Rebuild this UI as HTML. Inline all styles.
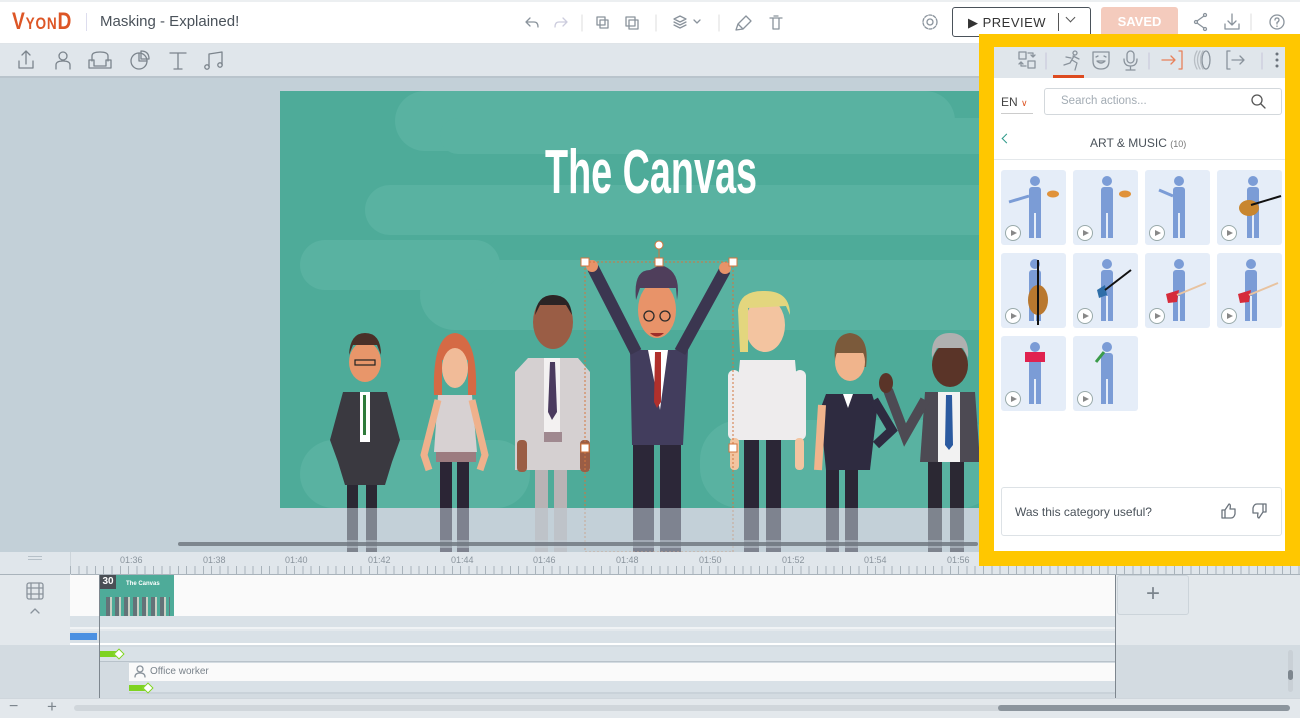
<!DOCTYPE html>
<html><head><meta charset="utf-8">
<style>
*{box-sizing:border-box;margin:0;padding:0}
body{width:1300px;height:718px;overflow:hidden;position:relative;font-family:"Liberation Sans",sans-serif;background:#c3d0d8}
.abs{position:absolute}
.ic{stroke:#8a939c;fill:none;stroke-width:1.3;stroke-linecap:round;stroke-linejoin:round}
.tile{position:absolute;width:65px;height:75px;background:#e5edf8;border-radius:3px}
.play{position:absolute;left:4px;bottom:4px;width:16px;height:16px;border-radius:50%;border:1px solid #9aa;background:#fff}
.play:after{content:"";position:absolute;left:5px;top:4px;border-left:6px solid #888;border-top:3.5px solid transparent;border-bottom:3.5px solid transparent}
.tl{position:absolute;font-size:9px;color:#8a949d;top:555px}
</style></head><body>

<svg class="abs" style="left:0;top:0" width="1300" height="718" viewBox="0 0 1300 718">
<rect x="0" y="78" width="1300" height="474" fill="#c3d0d8"/>
<rect x="280" y="91" width="720" height="417" fill="#4eab99"/>
<g fill="#59b2a1">
<rect x="395" y="91" width="560" height="60" rx="30"/>
<rect x="440" y="118" width="600" height="36" rx="18"/>
<rect x="365" y="185" width="640" height="50" rx="25"/>
<rect x="420" y="260" width="600" height="70" rx="35"/>
<rect x="300" y="240" width="200" height="50" rx="25"/>
<rect x="300" y="440" width="230" height="68" rx="34"/>
<rect x="700" y="420" width="300" height="88" rx="40"/>
</g>
<text x="651" y="193" font-family="'Liberation Sans Narrow','Liberation Sans',sans-serif" font-weight="bold" font-size="62" fill="#fff" text-anchor="middle" textLength="212" lengthAdjust="spacingAndGlyphs">The Canvas</text>
<g>
<rect x="347" y="480" width="11" height="72" fill="#2b2833"/><rect x="366" y="480" width="11" height="72" fill="#2b2833"/>
<path d="M343 392 L387 392 L400 440 L392 462 L385 485 L345 485 L338 462 L330 440Z" fill="#3a3940"/>
<rect x="360" y="392" width="10" height="50" fill="#fff"/><rect x="363" y="395" width="3" height="40" fill="#2f7a3a"/>
<ellipse cx="365" cy="362" rx="16" ry="20" fill="#e8966a"/><path d="M349 355 Q350 333 365 333 Q381 333 381 355 L377 345 L353 345Z" fill="#4a3028"/>
<rect x="355" y="360" width="20" height="5" fill="none" stroke="#222" stroke-width="1.2"/>
</g>
<g>
<rect x="440" y="460" width="12" height="92" fill="#2b2535"/><rect x="457" y="460" width="12" height="92" fill="#2b2535"/>
<path d="M438 395 L472 395 L477 452 L434 452Z" fill="#d7d1d2"/><rect x="436" y="452" width="40" height="10" fill="#9c7c80"/>
<path d="M438 400 L424 455 L429 470" stroke="#efb18c" stroke-width="7" fill="none"/><path d="M472 400 L485 455 L480 470" stroke="#efb18c" stroke-width="7" fill="none"/>
<path d="M434 395 Q432 335 455 333 Q478 335 476 395 L468 395 L468 360 L442 360 L442 395Z" fill="#d56a45"/>
<ellipse cx="455" cy="368" rx="13" ry="20" fill="#f1bb98"/>
</g>
<g>
<rect x="535" y="468" width="13" height="84" fill="#b8b3b5"/><rect x="554" y="468" width="13" height="84" fill="#b8b3b5"/>
<path d="M528 358 L578 358 L590 372 L590 470 L515 470 L515 372Z" fill="#d5d0d1"/>
<rect x="544" y="358" width="16" height="75" fill="#f3f1f1"/><path d="M550 362 L555 362 L557 412 L552 420 L548 412Z" fill="#4a3a5e"/>
<rect x="544" y="432" width="18" height="10" fill="#a08990"/>
<rect x="517" y="440" width="10" height="32" rx="4" fill="#9a5d45"/><rect x="580" y="440" width="10" height="32" rx="4" fill="#9a5d45"/>
<ellipse cx="553" cy="322" rx="20" ry="27" fill="#9a5d45"/><path d="M535 315 Q537 295 553 295 Q570 295 572 315 L566 305 L540 305Z" fill="#2b2425"/>
</g>
<g>
<rect x="633" y="440" width="21" height="112" fill="#2c2738"/><rect x="660" y="440" width="21" height="112" fill="#2c2738"/>
<path d="M630 350 L688 350 L683 445 L632 445Z" fill="#423d5d"/>
<path d="M648 350 L668 350 L660 410Z" fill="#fff"/><path d="M655 352 L661 352 L661 402 L657 408 L654 402Z" fill="#b0302c"/>
<path d="M636 352 L593 268" stroke="#3b3650" stroke-width="12"/><path d="M680 352 L725 270" stroke="#3b3650" stroke-width="12"/>
<circle cx="592" cy="266" r="6" fill="#e89369"/><circle cx="725" cy="268" r="6" fill="#e89369"/>
<ellipse cx="657" cy="310" rx="19" ry="28" fill="#e89369"/><path d="M636 300 Q633 270 650 270 L660 265 Q682 270 677 300 L676 288 L640 288Z" fill="#4f3e5b"/>
<circle cx="649" cy="316" r="5" fill="none" stroke="#2a2a2a" stroke-width="1.3"/><circle cx="665" cy="316" r="5" fill="none" stroke="#2a2a2a" stroke-width="1.3"/>
<path d="M650 333 Q657 340 664 333Z" fill="#9e2d2a"/>
</g>
<g>
<rect x="744" y="438" width="15" height="114" fill="#2b2636"/><rect x="766" y="438" width="15" height="114" fill="#2b2636"/>
<path d="M740 360 L795 360 L802 440 L732 440Z" fill="#eeeced"/>
<rect x="728" y="370" width="12" height="70" rx="6" fill="#eeeced"/><rect x="794" y="370" width="12" height="70" rx="6" fill="#eeeced"/>
<rect x="730" y="438" width="9" height="32" rx="4" fill="#f3c4a0"/><rect x="795" y="438" width="9" height="32" rx="4" fill="#f3c4a0"/>
<ellipse cx="765" cy="325" rx="20" ry="27" fill="#f3c4a0"/>
<path d="M740 352 L738 310 Q740 290 765 291 Q790 291 790 315 L786 306 L748 308 L748 352Z" fill="#e3d67e"/>
</g>
<g>
<rect x="826" y="462" width="13" height="90" fill="#2b2636"/><rect x="845" y="462" width="13" height="90" fill="#2b2636"/>
<path d="M826 394 L872 394 L877 410 L870 470 L826 470 L820 410Z" fill="#2e2b40"/>
<path d="M843 394 L853 394 L848 408Z" fill="#fff"/>
<path d="M822 405 L818 470" stroke="#f0b48c" stroke-width="8"/><path d="M874 400 L892 430 L876 445" stroke="#2e2b40" stroke-width="9" fill="none"/>
<path d="M836 367 Q830 335 850 333 Q870 335 866 367Z" fill="#7b5a3b"/>
<ellipse cx="850" cy="362" rx="15" ry="19" fill="#f0b48c"/><path d="M836 353 Q840 338 850 338 Q862 338 865 353Z" fill="#7b5a3b"/>
</g>
<g>
<rect x="928" y="460" width="14" height="92" fill="#2b2833"/><rect x="950" y="460" width="14" height="92" fill="#2b2833"/>
<path d="M925 392 L975 392 L980 462 L920 462Z" fill="#4d4a53"/>
<rect x="938" y="392" width="22" height="70" fill="#f2f2f2"/><path d="M946 395 L952 395 L953 445 L949 450 L945 445Z" fill="#2b5aa0"/>
<path d="M925 400 L905 435 L888 390" stroke="#4d4a53" stroke-width="10" fill="none"/><ellipse cx="886" cy="383" rx="7" ry="10" fill="#5a3428"/>
<ellipse cx="950" cy="365" rx="18" ry="22" fill="#5a3428"/><path d="M932 358 Q930 333 950 333 Q970 333 968 358 L963 348 L937 348Z" fill="#b0b0b0"/>
</g>
<g stroke="#d2763f" stroke-width="1" stroke-dasharray="2,2" fill="none">
<rect x="585" y="262" width="148" height="290"/></g>
<line x1="659" y1="248" x2="659" y2="262" stroke="#d2763f"/>
<circle cx="659" cy="245" r="4" fill="#fff" stroke="#d2763f"/>
<g fill="#fff" stroke="#d2763f"><rect x="581" y="258" width="8" height="8"/><rect x="655" y="258" width="8" height="8"/><rect x="729" y="258" width="8" height="8"/><rect x="581" y="444" width="8" height="8"/><rect x="729" y="444" width="8" height="8"/></g>
<rect x="280" y="508" width="720" height="44" fill="#c3d0d8" opacity="0.55"/>
<rect x="0" y="540" width="1000" height="8" fill="#c3d0d8" opacity="0.5"/>
<rect x="178" y="542" width="800" height="4" rx="2" fill="#6b737c" opacity="0.8"/>
</svg>

<div class="abs" style="left:0;top:0;width:1300px;height:44px;background:#fff;border-bottom:1px solid #dfe4e8;border-top:2px solid #eceff1"></div>
<div class="abs" style="left:12px;top:8px;font-family:'Liberation Sans Narrow','Liberation Sans',sans-serif;font-size:24px;color:#dd5626;letter-spacing:1px;font-weight:bold;transform:scaleX(0.8);transform-origin:left">V<span style="font-size:17px">YON</span>D</div>
<div class="abs" style="left:86px;top:13px;width:1px;height:18px;background:#dde"></div>
<div class="abs" style="left:100px;top:13px;font-size:15px;color:#4a525a">Masking - Explained!</div>
<svg class="abs" style="left:510px;top:12px" width="300" height="22">
<g class="ic"><path d="M20 6 L16 10 L20 14 M16 10 H24 Q28 10 28 15"/><path d="M53 6 L57 10 L53 14 M57 10 H49 Q45 10 45 15" style="stroke:#ccd"/>
<line x1="72" y1="3" x2="72" y2="19" style="stroke:#e5e5e5"/>
<rect x="87" y="5" width="8" height="8"/><rect x="90" y="8" width="8" height="8"/>
<rect x="116" y="5" width="9" height="9"/><rect x="119" y="8" width="9" height="9"/>
<line x1="146" y1="3" x2="146" y2="19" style="stroke:#e5e5e5"/>
<path d="M164 7 L170 4 L176 7 L170 10Z M164 10 L170 13 L176 10 M164 13 L170 16 L176 13"/><path d="M184 8 L187 11 L190 8"/>
<line x1="209" y1="3" x2="209" y2="19" style="stroke:#e5e5e5"/>
<path d="M228 12 L236 4 L241 9 L233 17Z M228 12 L226 18 L233 17"/>
<path d="M260 6 H272 M263 6 V17 H269 V6 M264 4 H268"/></g></svg>
<svg class="abs" style="left:920px;top:12px" width="20" height="20"><circle cx="10" cy="10" r="3" class="ic"/><circle cx="10" cy="10" r="7" class="ic" stroke-dasharray="3,1.5"/></svg>
<div class="abs" style="left:952px;top:7px;width:139px;height:30px;border:1px solid #4a525a;border-radius:3px"></div>
<div class="abs" style="left:968px;top:15px;font-size:13px;color:#333;letter-spacing:0.5px">▶&nbsp;PREVIEW</div>
<div class="abs" style="left:1058px;top:13px;width:1px;height:18px;background:#555"></div>
<div class="abs" style="left:1067px;top:14px;width:7px;height:7px;border-right:1.3px solid #555;border-bottom:1.3px solid #555;transform:rotate(45deg)"></div>
<div class="abs" style="left:1101px;top:7px;width:77px;height:30px;background:#f4cbbd;border-radius:3px;color:#fff;font-size:13px;font-weight:bold;text-align:center;line-height:30px">SAVED</div>
<svg class="abs" style="left:1188px;top:10px" width="110" height="24"><g class="ic"><circle cx="17" cy="5" r="1.5"/><circle cx="8" cy="12" r="1.5"/><circle cx="17" cy="19" r="1.5"/><path d="M16 6 L9 11 M9 13 L16 18"/><path d="M44 4 V15 M40 11 L44 15 L48 11 M37 14 V19 H51 V14"/><line x1="63" y1="4" x2="63" y2="20" style="stroke:#e5e5e5"/><circle cx="89" cy="12" r="7"/><path d="M87 10 Q87 8 89 8 Q91 8 91 10 Q91 11.5 89 12.5 V14 M89 16 V16.5"/></g></svg>

<div class="abs" style="left:0;top:44px;width:1300px;height:34px;background:#e0e6eb;border-bottom:2px solid #b9c4cc"></div>
<svg class="abs" style="left:14px;top:48px" width="220" height="26"><g class="ic" style="stroke:#7b848c"><path d="M5 13 V20 H19 V13 M12 3 V16 M8 7 L12 3 L16 7"/><circle cx="49" cy="8" r="4"/><path d="M42 21 V17 Q42 13 49 13 Q56 13 56 17 V21"/><path d="M78 13 V8 Q78 4 86 4 Q94 4 94 8 V13 M75 12 H80 V18 H92 V12 H97 V20 H75Z"/><circle cx="125" cy="13" r="8"/><path d="M125 5 V13 H133 M127 3 V11 H135 Q135 3 127 3"/><path d="M156 5 H172 M164 5 V21 M160 21 H168"/><path d="M195 19 V6 L208 4 V17"/><circle cx="193" cy="19" r="2.2"/><circle cx="206" cy="17" r="2.2"/></g></svg>

<div class="abs" style="left:0;top:552px;width:1300px;height:23px;background:#e0e6eb;border-bottom:1px solid #a9b3bb"></div>
<div class="abs" style="left:70px;top:552px;width:1px;height:166px;background:#ccd4da"></div>
<div class="abs" style="left:28px;top:556px;width:14px;height:4px;border-top:1px solid #b6c0c8;border-bottom:1px solid #b6c0c8"></div>
<div class="abs" style="left:70px;top:566px;width:1230px;height:8px;background:repeating-linear-gradient(90deg,#a9b3bb 0 1px,transparent 1px 8.3px)"></div>
<div class="tl" style="left:120px">01:36</div><div class="tl" style="left:203px">01:38</div><div class="tl" style="left:285px">01:40</div><div class="tl" style="left:368px">01:42</div><div class="tl" style="left:451px">01:44</div><div class="tl" style="left:533px">01:46</div><div class="tl" style="left:616px">01:48</div><div class="tl" style="left:699px">01:50</div><div class="tl" style="left:782px">01:52</div><div class="tl" style="left:864px">01:54</div><div class="tl" style="left:947px">01:56</div>

<div class="abs" style="left:0;top:575px;width:1300px;height:123px;background:#e3e8ec"></div>
<div class="abs" style="left:0;top:645px;width:1300px;height:53px;background:#d3dbe1"></div>
<div class="abs" style="left:70px;top:575px;width:1046px;height:41px;background:#fafafa"></div>
<div class="abs" style="left:70px;top:616px;width:1046px;height:13px;background:#d9e1e7;border-bottom:2px solid #f0f3f5"></div>
<div class="abs" style="left:70px;top:631px;width:1046px;height:14px;background:#d9e1e7;border-bottom:2px solid #fff"></div>
<div class="abs" style="left:100px;top:647px;width:1016px;height:15px;background:#d9e1e7;border-bottom:1px solid #b8c2ca"></div>
<div class="abs" style="left:129px;top:663px;width:987px;height:18px;background:#fafafa"></div>
<div class="abs" style="left:129px;top:681px;width:987px;height:13px;background:#d9e1e7;border-bottom:2px solid #c9d2d9"></div>
<div class="abs" style="left:99px;top:575px;width:1px;height:123px;background:#7d868e"></div>
<div class="abs" style="left:1115px;top:575px;width:1px;height:123px;background:#7d868e"></div>
<div class="abs" style="left:100px;top:575px;width:74px;height:41px;background:#4eab99;overflow:hidden">
 <div style="position:absolute;left:26px;top:6px;color:#fff;font-size:6px;font-weight:bold">The Canvas</div>
 <div style="position:absolute;left:0;top:0;width:16px;height:14px;background:#4a4f55;color:#fff;font-size:10px;font-weight:bold;text-align:center;line-height:14px">30</div>
 <div style="position:absolute;left:6px;top:22px;width:64px;height:19px;background:repeating-linear-gradient(90deg,#6a6470 0 4px,#e8d9cf 4px 6px,transparent 6px 9px);opacity:0.8"></div>
</div>
<div class="abs" style="left:70px;top:633px;width:27px;height:7px;background:#4a90e2"></div>
<div class="abs" style="left:100px;top:651px;width:18px;height:6px;background:#7ed321"></div>
<div class="abs" style="left:115px;top:650px;width:8px;height:8px;background:#fff;border:1px solid #7ed321;transform:rotate(45deg)"></div>
<div class="abs" style="left:129px;top:685px;width:18px;height:6px;background:#7ed321"></div>
<div class="abs" style="left:144px;top:684px;width:8px;height:8px;background:#fff;border:1px solid #7ed321;transform:rotate(45deg)"></div>
<div class="abs" style="left:150px;top:666px;font-size:10px;color:#7a838b">Office worker</div>
<svg class="abs" style="left:133px;top:664px" width="14" height="14"><g class="ic"><circle cx="7" cy="5" r="3"/><path d="M2 13 Q2 9 7 9 Q12 9 12 13"/></g></svg>
<svg class="abs" style="left:24px;top:580px" width="22" height="40"><g class="ic"><rect x="3" y="3" width="16" height="16" rx="2"/><path d="M7 3 V19 M15 3 V19 M3 8 H19 M3 14 H19"/><path d="M7 33 L11 29 L15 33"/></g></svg>
<div class="abs" style="left:1117px;top:575px;width:72px;height:40px;background:#e0e6eb;border:1px solid #ccd4da;border-radius:3px;color:#7b848c;font-size:24px;text-align:center;line-height:36px;font-weight:300">+</div>
<div class="abs" style="left:1288px;top:650px;width:5px;height:42px;background:#c9d0d6;border-radius:3px"></div>
<div class="abs" style="left:1288px;top:670px;width:5px;height:10px;background:#7d868e;border-radius:3px"></div>
<div class="abs" style="left:0;top:698px;width:1300px;height:20px;background:#e3e8ec;border-top:1px solid #cfd6dc"></div>
<div class="abs" style="left:9px;top:698px;font-size:16px;color:#7b848c">−</div>
<div class="abs" style="left:47px;top:697px;font-size:17px;color:#7b848c">+</div>
<div class="abs" style="left:74px;top:705px;width:1216px;height:6px;background:#d0d6db;border-radius:3px"></div>
<div class="abs" style="left:998px;top:705px;width:292px;height:6px;background:#8c959d;border-radius:3px"></div>

<div class="abs" style="left:979px;top:34px;width:321px;height:532px;background:#ffc700"></div>
<div class="abs" style="left:994px;top:47px;width:291px;height:504px;background:#fff"></div>
<div class="abs" style="left:994px;top:47px;width:291px;height:31px;background:#e0e6eb"></div>
<svg class="abs" style="left:994px;top:47px" width="291" height="31"><g class="ic">
<rect x="25" y="5" width="7" height="7"/><rect x="34" y="14" width="7" height="7"/><path d="M34 6 H39 V10 M37 8 L39 10 L41 8 M32 19 H27 V15 M25 17 L27 15 L29 17"/>
<line x1="52" y1="6" x2="52" y2="22" style="stroke:#ccd"/>
<circle cx="81" cy="6" r="2"/><path d="M80 9 L76 16 L70 18 M78 13 L83 16 L81 23 M79 9 L85 12 M77 11 L72 10"/>
<path d="M99 5 H115 V14 Q115 22 107 22 Q99 22 99 14Z M102 10 L104 9 M110 9 L112 10 M103 14 Q107 18 111 14Z"/>
<rect x="133" y="4" width="7" height="12" rx="3.5"/><path d="M130 12 Q130 19 136.5 19 Q143 19 143 12 M136.5 19 V23 M132 23 H141"/>
<line x1="155" y1="6" x2="155" y2="22" style="stroke:#ccd"/>
<path d="M168 13 H181 M177 9 L181 13 L177 17 M185 4 H188 V22 H185" style="stroke:#e8805a"/>
<ellipse cx="212" cy="13" rx="4" ry="9"/><path d="M206 4 Q201 13 206 22 M203 4 Q198 13 203 22 M209 4 Q204 13 209 22" style="stroke:#b8bec4"/>
<path d="M236 4 H233 V22 H236 M238 13 H250 M246 9 L250 13 L246 17"/>
<line x1="268" y1="6" x2="268" y2="22" style="stroke:#ccd"/></g>
<g fill="#6b737c"><circle cx="283" cy="7" r="1.5"/><circle cx="283" cy="13" r="1.5"/><circle cx="283" cy="19" r="1.5"/></g>
<rect x="59" y="28" width="31" height="3" fill="#dd4b20"/></svg>
<div class="abs" style="left:1001px;top:95px;font-size:12px;color:#444;width:32px;border-bottom:1px solid #ccc;padding-bottom:4px">EN <span style="color:#dd5626;font-size:9px">&#8744;</span></div>
<div class="abs" style="left:1044px;top:88px;width:238px;height:27px;border:1px solid #d3d8dc;border-radius:3px;font-size:11.5px;color:#a3acb4;padding:6px 16px">Search actions...</div>
<svg class="abs" style="left:1250px;top:93px" width="16" height="16"><g class="ic" style="stroke:#555"><circle cx="7" cy="7" r="5"/><path d="M11 11 L15 15"/></g></svg>
<div class="abs" style="left:1003px;top:135px;width:7px;height:7px;border-left:1.3px solid #2e9a8a;border-bottom:1.3px solid #2e9a8a;transform:rotate(45deg)"></div>
<div class="abs" style="left:1090px;top:136px;font-size:12px;color:#4a525a">ART &amp; MUSIC <span style="font-size:9px;color:#777">(10)</span></div>
<div class="abs" style="left:994px;top:159px;width:291px;height:1px;background:#e4e8eb"></div>

<div class="tile" style="left:1001px;top:170px"></div><div class="tile" style="left:1073px;top:170px"></div><div class="tile" style="left:1145px;top:170px"></div><div class="tile" style="left:1217px;top:170px"></div>
<div class="tile" style="left:1001px;top:253px"></div><div class="tile" style="left:1073px;top:253px"></div><div class="tile" style="left:1145px;top:253px"></div><div class="tile" style="left:1217px;top:253px"></div>
<div class="tile" style="left:1001px;top:336px"></div><div class="tile" style="left:1073px;top:336px"></div>
<svg class="abs" style="left:1001px;top:170px" width="282" height="241">
<defs><g id="fig" fill="#7b9cd6"><circle cx="0" cy="11" r="5"/><rect x="-6" y="17" width="12" height="26" rx="3"/><rect x="-6" y="40" width="5" height="28"/><rect x="1" y="40" width="5" height="28"/></g></defs>
<use href="#fig" x="34" y="0"/><path d="M28 26 L8 32" stroke="#7b9cd6" stroke-width="3"/><ellipse cx="52" cy="24" rx="6" ry="3.5" fill="#e0923a"/>
<use href="#fig" x="106" y="0"/><ellipse cx="124" cy="24" rx="6" ry="3.5" fill="#e0923a"/>
<use href="#fig" x="178" y="0"/><path d="M172 26 L158 20" stroke="#7b9cd6" stroke-width="3"/>
<use href="#fig" x="252" y="0"/><ellipse cx="248" cy="38" rx="10" ry="8" fill="#c8862f"/><path d="M250 35 L280 26" stroke="#111" stroke-width="2"/>
<use href="#fig" x="34" y="83"/><ellipse cx="37" cy="130" rx="10" ry="15" fill="#b9782f"/><path d="M37 90 V155" stroke="#111" stroke-width="2"/>
<use href="#fig" x="106" y="83"/><path d="M96 120 L104 115 L106 125 L98 128Z" fill="#2e6ea8"/><path d="M104 120 L130 100" stroke="#111" stroke-width="2"/>
<use href="#fig" x="178" y="83"/><path d="M165 124 L178 120 L176 132 L167 133Z" fill="#d62b3a"/><path d="M176 125 L205 113" stroke="#e8c3a0" stroke-width="2"/>
<use href="#fig" x="250" y="83"/><path d="M237 124 L250 120 L248 132 L239 133Z" fill="#d62b3a"/><path d="M248 125 L277 113" stroke="#e8c3a0" stroke-width="2"/>
<use href="#fig" x="34" y="166"/><rect x="24" y="182" width="20" height="10" fill="#e0224f"/>
<use href="#fig" x="106" y="166"/><path d="M95 192 L103 182" stroke="#3a9b4a" stroke-width="3"/>
</svg>
<div class="play" style="left:1005px;top:225px"></div><div class="play" style="left:1077px;top:225px;"></div><div class="play" style="left:1149px;top:225px"></div><div class="play" style="left:1221px;top:225px"></div>
<div class="play" style="left:1005px;top:308px"></div><div class="play" style="left:1077px;top:308px"></div><div class="play" style="left:1149px;top:308px"></div><div class="play" style="left:1221px;top:308px"></div>
<div class="play" style="left:1005px;top:391px"></div><div class="play" style="left:1077px;top:391px"></div>

<div class="abs" style="left:1001px;top:487px;width:281px;height:49px;border:1px solid #dde2e6;border-radius:3px"></div>
<div class="abs" style="left:1015px;top:505px;font-size:12px;color:#4a525a">Was this category useful?</div>
<svg class="abs" style="left:1220px;top:502px" width="50" height="18"><g class="ic" style="stroke:#6b737c"><path d="M2 8 H5 V16 H2Z M5 8 L9 2 Q11 2 10 7 H15 V12 Q14 16 11 16 H5"/><path d="M46 10 H43 V2 H46Z M43 10 L39 16 Q37 16 38 11 H33 V6 Q34 2 37 2 H43"/></g></svg>
</body></html>
